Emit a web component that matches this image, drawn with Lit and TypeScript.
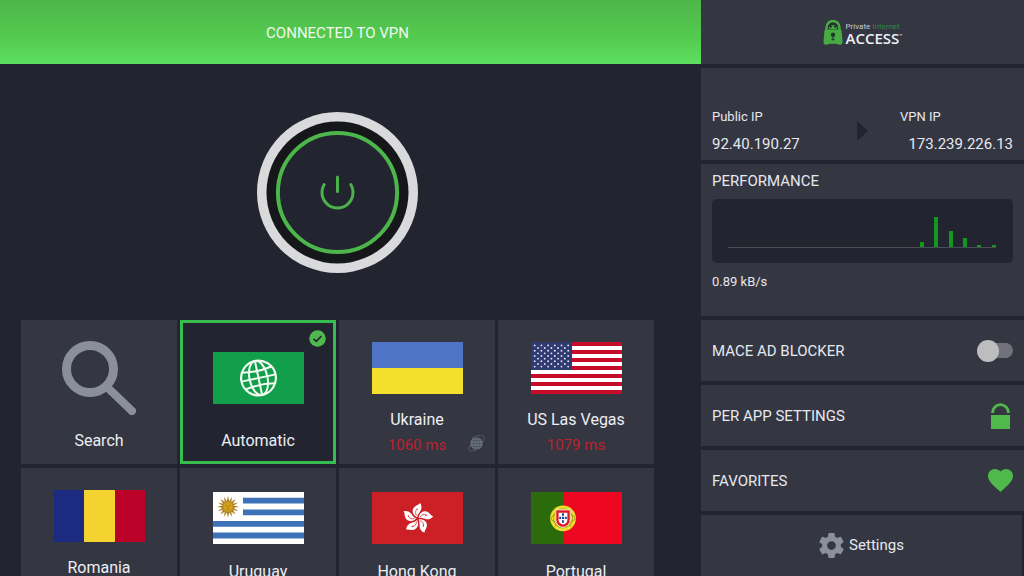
import { LitElement, html, css, svg, nothing } from "lit";
import { customElement, property, state } from "lit/decorators.js";

const range = (n: number) => Array.from({ length: n }, (_, i) => i);

const globe = svg`
  <rect width="91" height="52" fill="#119f4b"></rect>
  <g transform="translate(45.5 26) rotate(-12)" fill="none" stroke="#f1fbf0" stroke-width="2">
    <circle r="17.4" stroke-width="2.200"></circle>
    <ellipse rx="9" ry="17.4"></ellipse>
    <path d="M0-17.4V17.4M-17.4 0H17.4M-15-8.6Q0-5.6 15-8.6M-15 8.6Q0 5.6 15 8.6"></path>
  </g>`;

const ukraine = svg`
  <rect width="91" height="26" fill="#4e74c6"></rect>
  <rect y="26" width="91" height="26" fill="#f2df2e"></rect>`;

const usa = svg`
  <rect width="91" height="52" fill="#fff"></rect>
  ${range(7).map((i) => svg`<rect y=${i * 8} width="91" height="4" fill="#c60c28"></rect>`)}
  <rect width="41" height="28" fill="#303a72"></rect>
  ${range(9).map((r) =>
    range(r % 2 ? 5 : 6).map(
      (c) => svg`<circle cx=${(r % 2 ? 7 : 3.7) + c * 6.7} cy=${3.4 + r * 2.65} r="0.95" fill="#dfe3f2"></circle>`,
    ),
  )}`;

const romania = svg`
  <rect width="30" height="52" fill="#1b2c80"></rect>
  <rect x="30" width="31" height="52" fill="#f4d22f"></rect>
  <rect x="61" width="30" height="52" fill="#bb0329"></rect>`;

const uruguay = svg`
  <rect width="91" height="52" fill="#fff"></rect>
  <path d="M30 5.8H91v5.8H30zM30 17.4H91v5.8H30zM0 29H91v5.8H0zM0 40.6H91v5.8H0z" fill="#3e72b8"></path>
  <g transform="translate(15 14.8)">
    ${range(16).map(
      (i) => svg`<path transform="rotate(${i * 22.5})" d="M-1.3-5L0-11L1.3-5z" fill=${i % 2 ? "#b08a2c" : "#a97f1e"}></path>`,
    )}
    <circle r="5.2" fill="#d3a21c" stroke="#a67d1c" stroke-width="0.7"></circle>
    <path d="M-2.5-1.2h1.6M.9-1.2h1.6M0-.8V1M-1.6 2.4H1.6" stroke="#8d6714" stroke-width="0.6"></path>
  </g>`;

const hongKong = svg`
  <rect width="91" height="52" fill="#cd2026"></rect>
  <g transform="translate(45.5 26.6)">
    ${range(5).map(
      (i) => svg`<g transform="rotate(${i * 72})">
        <path d="M-.4-1.4C-5.6-4-6.2-9.6-2.4-12.2C-.6-13.6 1.6-14 2.8-15.6C4.6-12.4 4.2-9.6 2.8-7.4C1.4-5.4 .2-4.2-.4-1.4z" fill="#fff"></path>
        <path d="M-.8-3C-2.6-5.2-2.2-7.8-.6-9.2" fill="none" stroke="#cd2026" stroke-width="0.7"></path>
        <circle cx="-0.4" cy="-9.4" r="0.7" fill="#cd2026"></circle>
      </g>`,
    )}
  </g>`;

const portugal = svg`
  <rect width="91" height="52" fill="#ee0720"></rect>
  <rect width="32" height="52" fill="#2c6b0b"></rect>
  <g transform="translate(32 26.3)">
    <circle r="12.9" fill="#efe02f"></circle>
    <g fill="none" stroke="#8f8a1c" stroke-width="0.7">
      <circle r="9.6"></circle>
      <ellipse rx="12" ry="5"></ellipse>
      <path d="M-9-9L9 9M9-9L-9 9"></path>
    </g>
    <path d="M-7.2-8.4H7.2V1.4a7.2 7.6 0 0 1-14.4 0z" fill="#e01725" stroke="#f4efdf" stroke-width="0.9"></path>
    <path d="M-4.4-5.6H4.4V1.4a4.4 4.8 0 0 1-8.8 0z" fill="#fff"></path>
    <path d="M-1-5H1v2.4h-2zM-1-1.6H1v2.4h-2zM-1 2H1v2.4h-2zM-3.8-1.6h2v2.4h-2zM1.8-1.6h2v2.4h-2z" fill="#27459a"></path>
  </g>`;

interface Region {
  name: string;
  flag?: unknown;
  latency?: string;
  kind: "plain" | "short" | "ping";
  selected?: boolean;
  geo?: boolean;
}

const regions: Region[] = [
  { name: "Search", kind: "short" },
  { name: "Automatic", kind: "short", flag: globe, selected: true },
  { name: "Ukraine", kind: "ping", flag: ukraine, latency: "1060 ms", geo: true },
  { name: "US Las Vegas", kind: "ping", flag: usa, latency: "1079 ms" },
  { name: "Romania", kind: "ping", flag: romania },
  { name: "Uruguay", kind: "plain", flag: uruguay },
  { name: "Hong Kong", kind: "plain", flag: hongKong },
  { name: "Portugal", kind: "plain", flag: portugal },
];

@customElement("region-tile")
class RegionTile extends LitElement {
  @property({ attribute: false }) region!: Region;

  static styles = css`
    :host { display: grid; min-width: 0; }
    .tile {
      position: relative;
      display: flex;
      flex-direction: column;
      align-items: center;
      margin: 0;
      padding: 22px 0 0;
      border: 0;
      background: #343641;
      color: #eceef4;
      font: 16px/20px Roboto, sans-serif;
      min-width: 0;
    }
    .plain { padding-top: 24px; }
    .selected { background: #22252f; box-shadow: inset 0 0 0 3px #36bd4d; }
    .picture { height: 52px; flex: none; }
    .short { padding-top: 21px; }
    .short .picture { height: 74px; display: flex; align-items: center; }
    .flag, .glass { display: block; }
    .name { margin-top: 16px; white-space: nowrap; }
    .plain .name { margin-top: 18px; }
    .latency { margin-top: 5px; font-size: 15px; color: #bd2230; }
    .check { position: absolute; top: 10px; right: 10px; }
    .geo { position: absolute; right: 10px; bottom: 12px; }
  `;

  render() {
    const r = this.region;
    return html`
      <button class="tile ${r.kind} ${r.selected ? "selected" : ""}" type="button">
        <span class="picture">
          ${r.flag
            ? html`<svg class="flag" width="91" height="52" viewBox="0 0 91 52" aria-hidden="true">${r.flag}</svg>`
            : html`<svg class="glass" width="74" height="74" viewBox="0 0 74 74" fill="none" stroke="#8b8f9b" aria-hidden="true">
                <circle cx="28" cy="28" r="23.5" stroke-width="9"></circle>
                <path d="M45 46L70 70" stroke-width="8" stroke-linecap="round"></path>
              </svg>`}
        </span>
        <span class="name">${r.name}</span>
        ${r.latency ? html`<span class="latency">${r.latency}</span>` : nothing}
        ${r.selected
          ? html`<svg class="check" width="17" height="17" viewBox="0 0 17 17" aria-hidden="true">
              <circle cx="8.5" cy="8.5" r="8.3" fill="#4fb950"></circle>
              <path d="M4.6 8.8L7.3 11.4L12.4 6" fill="none" stroke="#22252f" stroke-width="1.7"></path>
            </svg>`
          : nothing}
        ${r.geo
          ? html`<svg class="geo" width="17" height="17" viewBox="0 0 17 17" fill="none" aria-hidden="true">
              <circle cx="8.5" cy="8.5" r="6.200" fill="#69727c"></circle>
              <g stroke="#464c57" stroke-width="0.6">
                <ellipse cx="8.5" cy="8.5" rx="3" ry="6"></ellipse>
                <path d="M8.5 2.5v12M2.5 8.5h12M3.500 5.500h10M3.500 11.500h10"></path>
              </g>
              <path d="M4 3.500C8 .5 14-.5 15.800 1.500C16.800 3 15.500 6 14 8M3 9C.8 12 .2 14.500 1.200 15.500C2.500 16.600 6 15.500 8.500 14.500" stroke="#626a75" stroke-width="0.7"></path>
            </svg>`
          : nothing}
      </button>
    `;
  }
}

@customElement("app-root")
class AppRoot extends LitElement {
  @state() private mace = false;

  private traffic = [0, 0, 0, 0, 0, 0, 0, 0, 0, 0, 0, 0, 0, 5, 30, 16, 9, 2, 2];

  static styles = css`
    :host {
      display: grid;
      grid-template-columns: minmax(0, 1fr) 323px;
      height: 100vh;
      overflow: hidden;
      background: #22252f;
      color: #e6e8f0;
      font: 15px/20px Roboto, sans-serif;
    }
    * { box-sizing: border-box; }
    .main { display: flex; flex-direction: column; min-height: 0; overflow: hidden; }
    .status {
      flex: none;
      display: flex;
      align-items: center;
      justify-content: center;
      height: 64px;
      padding: 2px 47px 0 21px;
      background: linear-gradient(#4fb64a, #54cb50 60%, #5cdf60);
      color: #f0f8ee;
    }
    .status-text { margin: 0; font-size: 15px; font-weight: 400; }
    .connect { flex: none; display: flex; align-items: center; justify-content: center; height: 256px; padding: 0 47px 0 21px; }
    .power { display: block; padding: 0; border: 0; border-radius: 50%; background: none; }
    .power-art { display: block; }
    .regions {
      display: grid;
      grid-template-columns: repeat(4, minmax(0, 1fr));
      grid-auto-rows: 144px;
      gap: 4px 3px;
      padding: 0 47px 0 21px;
    }
    .side { display: flex; flex-direction: column; gap: 4px; min-height: 0; }
    .panel { background: #343641; flex: none; padding: 0 11px; }
    .brand { display: flex; align-items: center; justify-content: center; gap: 3px; height: 64px; }
    .brand-words { display: grid; padding-top: 4px; }
    .brand-top { font-size: 8px; line-height: 8px; color: #c9cbd4; }
    .brand-green { color: #2f8a3e; }
    .brand-name { display: flex; font: 600 15px/14px "Open Sans", sans-serif; color: #eef0f6; }
    .brand-mark { font-size: 4px; line-height: 10px; font-weight: 400; }
    .addresses {
      display: grid;
      grid-template-columns: 1fr auto 1fr;
      align-items: center;
      padding-top: 39px;
      padding-bottom: 6px;
    }
    .address { display: grid; gap: 7px; }
    .vpn { justify-self: end; width: 113px; }
    .vpn .ip { text-align: right; }
    .caption { font-size: 13px; }
    .performance { height: 152px; padding-top: 7px; }
    .heading { margin: 0; font-size: 15px; font-weight: 400; }
    .graph { height: 64px; margin: 8px 0; padding: 18px 17px 0 16px; border-radius: 5px; background: #22252f; }
    .bars {
      display: flex;
      align-items: flex-end;
      justify-content: space-between;
      height: 31px;
      padding-left: 4px;
      border-bottom: 1px solid #4a4c52;
    }
    .bar { width: 4px; background: #12981f; }
    .row {
      display: flex;
      align-items: center;
      justify-content: space-between;
      width: 100%;
      height: 61px;
      border: 0;
      color: inherit;
      font: inherit;
      text-align: left;
    }
    .icon { display: block; flex: none; }
    .lock { margin-right: 2px; }
    .toggle {
      appearance: none;
      display: flex;
      align-items: center;
      width: 36px;
      height: 22px;
      margin: 0;
      border-radius: 11px;
      background: radial-gradient(circle at 50% 50%, #717279 7px, transparent 8px) 21px 50% / 15px 15px no-repeat,
        linear-gradient(#717279, #717279) 10px 50% / 18px 15px no-repeat;
    }
    .toggle::before { content: ""; width: 22px; height: 22px; border-radius: 50%; background: #bdbdbf; }
    .toggle:checked::before { margin-left: 14px; background: #4fb950; }
    .settings { justify-content: center; gap: 5px; width: auto; margin-right: 2px; }
    .settings-text { padding-bottom: 2px; }
  `;

  render() {
    return html`
      <main class="main">
        <header class="status"><h1 class="status-text">CONNECTED TO VPN</h1></header>
        <section class="connect">
          <button class="power" type="button" aria-label="Disconnect">
            <svg class="power-art" width="161" height="161" viewBox="-80.5 -80.5 161 161" fill="none" aria-hidden="true">
              <circle r="80.5" fill="#dadadc"></circle>
              <circle r="71" fill="#15171a"></circle>
              <circle r="59.600" fill="#22252f" stroke="#4cb64a" stroke-width="4"></circle>
              <path d="M0-15.500V-1M-13.300-8A15.500 15.500 0 1 0 13.300-8" stroke="#4cb04c" stroke-width="3" stroke-linecap="round"></path>
            </svg>
          </button>
        </section>
        <section class="regions">
          ${regions.map((r) => html`<region-tile .region=${r}></region-tile>`)}
        </section>
      </main>
      <aside class="side">
        <div class="panel brand">
          <svg class="icon" width="20" height="25" viewBox="0 0 20 25" aria-hidden="true">
            <path d="M3.500 10V7.500a6.500 6.500 0 0 1 13 0V10" fill="#26352f" stroke="#47ad43" stroke-width="2.400"></path>
            <path d="M5.500 7.500Q10 3 14.500 7.500L13 9H7z" fill="#47ad43"></path>
            <circle cx="7.800" cy="6.800" r="1.100" fill="#1f2b28"></circle>
            <circle cx="12.200" cy="6.800" r="1.100" fill="#1f2b28"></circle>
            <path d="M3 9.500H17Q18.400 9.500 18.600 11L19.500 22Q19.500 24.800 17 24.800Q15 24.800 13.500 23.800H6.500Q5 24.800 3 24.800Q.5 24.800 .5 22L1.400 11Q1.600 9.500 3 9.500z" fill="#47ad43"></path>
            <circle cx="10" cy="14.800" r="2.200" fill="#1f3a2a"></circle>
            <path d="M9 15h2v2.500h-2zM8.600 18.500h2.800v1.800h-2.800z" fill="#1f3a2a"></path>
          </svg>
          <div class="brand-words">
            <span class="brand-top">Private <span class="brand-green">Internet</span></span>
            <span class="brand-name">ACCESS<span class="brand-mark">™</span></span>
          </div>
        </div>
        <div class="panel addresses">
          <div class="address"><span class="caption">Public IP</span><span class="ip">92.40.190.27</span></div>
          <svg class="icon" width="11" height="20" viewBox="0 0 11 20" aria-hidden="true"><path d="M0 0L11 10L0 20z" fill="#22252f"></path></svg>
          <div class="address vpn"><span class="caption">VPN IP</span><span class="ip">173.239.226.13</span></div>
        </div>
        <section class="panel performance">
          <h2 class="heading">PERFORMANCE</h2>
          <div class="graph">
            <div class="bars">${this.traffic.map((v) => html`<span class="bar" style="height:${v}px"></span>`)}</div>
          </div>
          <span class="caption">0.89 kB/s</span>
        </section>
        <label class="panel row">
          MACE AD BLOCKER
          <input
            class="toggle"
            type="checkbox"
            .checked=${this.mace}
            @change=${(e: Event) => (this.mace = (e.target as HTMLInputElement).checked)}
          />
        </label>
        <button class="panel row" type="button">
          PER APP SETTINGS
          <svg class="icon lock" width="21" height="26" viewBox="0 0 21 26" aria-hidden="true">
            <path d="M2.600 10V9.500a7.900 7.900 0 0 1 15.800 0V10" fill="none" stroke="#4fb94b" stroke-width="2.800"></path>
            <path d="M1 12H20V26H1z" fill="#4fb94b"></path>
          </svg>
        </button>
        <button class="panel row" type="button">
          FAVORITES
          <svg class="icon" width="25" height="23" viewBox="2 3 20 18.400" aria-hidden="true">
            <path d="M12 21.350l-1.450-1.320C5.400 15.360 2 12.280 2 8.500 2 5.420 4.420 3 7.500 3c1.740 0 3.410.81 4.500 2.090C13.090 3.810 14.760 3 16.500 3 19.580 3 22 5.420 22 8.500c0 3.780-3.400 6.860-8.550 11.540L12 21.350z" fill="#4fb94b"></path>
          </svg>
        </button>
        <button class="panel row settings" type="button">
          <svg class="icon" width="25" height="25" viewBox="2 2 20 20" aria-hidden="true">
            <path d="M19.430 12.980c.04-.32.07-.64.07-.98s-.03-.66-.07-.98l2.110-1.650c.19-.15.24-.42.12-.64l-2-3.460c-.12-.22-.39-.3-.61-.22l-2.490 1c-.52-.4-1.080-.73-1.690-.98l-.38-2.650C14.460 2.180 14.250 2 14 2h-4c-.25 0-.46.18-.49.42l-.38 2.650c-.61.25-1.170.59-1.690.98l-2.490-1c-.23-.09-.49 0-.61.22l-2 3.460c-.13.22-.07.49.12.64l2.110 1.650c-.04.32-.07.65-.07.98s.03.66.07.98l-2.110 1.650c-.19.15-.24.42-.12.64l2 3.460c.12.22.39.3.61.22l2.490-1c.52.4 1.080.73 1.690.98l.38 2.650c.03.24.24.42.49.42h4c.25 0 .46-.18.49-.42l.38-2.650c.61-.25 1.170-.59 1.690-.98l2.490 1c.23.09.49 0 .61-.22l2-3.460c.12-.22.07-.49-.12-.64l-2.110-1.650zM12 15.500c-1.930 0-3.500-1.570-3.500-3.500s1.570-3.500 3.500-3.500 3.500 1.570 3.500 3.500-1.570 3.500-3.500 3.500z" fill="#8b8f9b"></path>
          </svg>
          <span class="settings-text">Settings</span>
        </button>
      </aside>
    `;
  }
}
